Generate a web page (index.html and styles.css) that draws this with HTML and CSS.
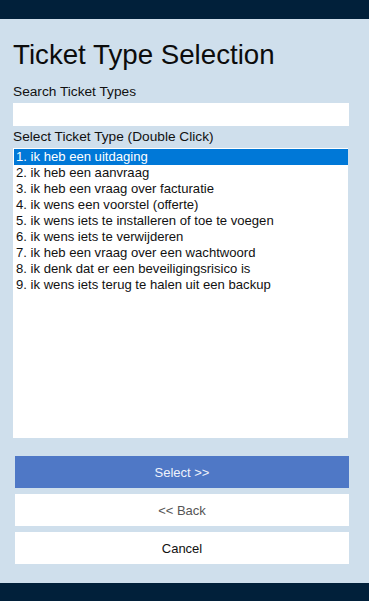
FILE: index.html
```html
<!DOCTYPE html>
<html>
<head>
<meta charset="utf-8">
<link rel="stylesheet" href="styles.css">
</head>
<body>
<div class="page">
  <div class="topbar"></div>
  <main class="main">
    <h1 class="title">Ticket Type Selection</h1>
    <label class="label label-search">Search Ticket Types</label>
    <input class="search" type="text">
    <label class="label label-list">Select Ticket Type (Double Click)</label>
    <ul class="list">
      <li class="item selected">1. ik heb een uitdaging</li>
      <li class="item">2. ik heb een aanvraag</li>
      <li class="item">3. ik heb een vraag over facturatie</li>
      <li class="item">4. ik wens een voorstel (offerte)</li>
      <li class="item">5. ik wens iets te installeren of toe te voegen</li>
      <li class="item">6. ik wens iets te verwijderen</li>
      <li class="item">7. ik heb een vraag over een wachtwoord</li>
      <li class="item">8. ik denk dat er een beveiligingsrisico is</li>
      <li class="item">9. ik wens iets terug te halen uit een backup</li>
    </ul>
    <div class="buttons">
      <button class="btn btn-primary">Select &gt;&gt;</button>
      <button class="btn btn-back">&lt;&lt; Back</button>
      <button class="btn btn-cancel">Cancel</button>
    </div>
  </main>
  <div class="bottombar"></div>
</div>
</body>
</html>
```

FILE: styles.css
```css
html, body {
  margin: 0;
  padding: 0;
  height: 100%;
}
body {
  font-family: "Liberation Sans", Arial, sans-serif;
  color: #111;
  background: #cfdfec;
}
.page {
  display: flex;
  flex-direction: column;
  height: 601px;
}
.topbar {
  height: 19px;
  background: #01203a;
  flex: none;
}
.bottombar {
  height: 18px;
  background: #01203a;
  flex: none;
}
.main {
  flex: 1;
  display: flex;
  flex-direction: column;
  padding: 0 20px 0 13px;
  background: #cfdfec;
}
.title {
  margin: 20px 0 0 0;
  font-size: 27.7px;
  line-height: 32px;
  font-weight: normal;
  color: #0c0c0c;
}
.label {
  display: block;
  font-size: 13.7px;
  line-height: 16px;
  color: #111;
}
.label-search {
  margin-top: 13px;
}
.search {
  margin: 3px 0 0 0;
  height: 23px;
  box-sizing: border-box;
  border: none;
  background: #fff;
  width: 336px;
  padding: 0 4px;
  outline: none;
}
.label-list {
  margin-top: 3px;
}
.list {
  list-style: none;
  margin: 3px 0 0 0;
  padding: 1px 0 0 1px;
  width: 335px;
  box-sizing: border-box;
  height: 290px;
  background: #fff;
}
.item {
  height: 16px;
  line-height: 16px;
  font-size: 13.1px;
  padding-left: 2px;
  color: #111;
  white-space: nowrap;
}
.item.selected {
  background: #0078d7;
  color: #fff;
}
.buttons {
  display: flex;
  flex-direction: column;
  gap: 6px;
  margin: 18px 0 0 2px;
}
.btn {
  height: 32px;
  width: 334px;
  border: none;
  font-family: "Liberation Sans", Arial, sans-serif;
  font-size: 13px;
  background: #fff;
  padding: 0;
}
.btn-primary {
  background: #4f78c6;
  color: #eef2fb;
}
.btn-back {
  color: #555;
}
.btn-cancel {
  color: #111;
}
```
